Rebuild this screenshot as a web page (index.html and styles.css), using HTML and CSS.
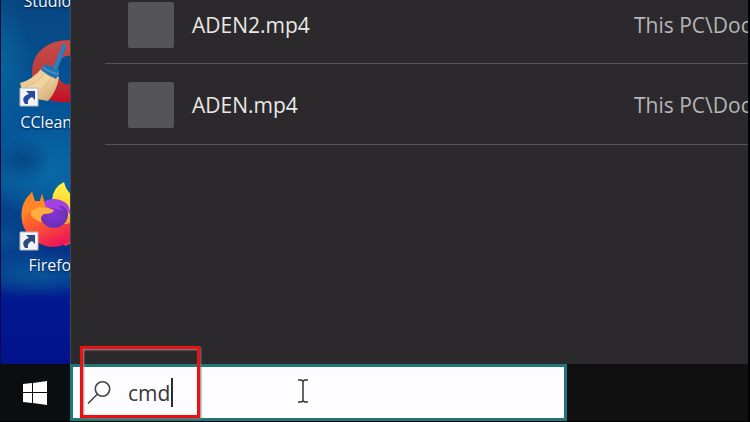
FILE: index.html
```html
<!DOCTYPE html>
<html lang="en">
<head>
<meta charset="utf-8">
<meta name="viewport" content="width=device-width, initial-scale=1">
<title>Windows Search</title>
<link rel="stylesheet" href="styles.css">
</head>
<body>
<div class="workspace">
  <nav class="desktop" aria-label="Desktop">
    <a class="shortcut shortcut-top" href="#"><span class="shortcut-name">Studio 3</span></a>
    <a class="shortcut" href="#">
      <svg class="shortcut-icon" viewBox="0 0 80 72" aria-hidden="true">
        <defs>
          <linearGradient id="cc-red" x1="0" y1="0" x2="0" y2="1"><stop offset="0" stop-color="#c94b48"/><stop offset=".6" stop-color="#b83b3d"/><stop offset="1" stop-color="#c60c25"/></linearGradient>
          <linearGradient id="cc-brush" x1="0" y1="0" x2="1" y2="1"><stop offset="0" stop-color="#e2b87c"/><stop offset=".5" stop-color="#f3d6a4"/><stop offset="1" stop-color="#c99b62"/></linearGradient>
        </defs>
        <path d="M74 7C64 0 50 0 39 4C25 10 19 20 19 34C19 51 31 62 47 63C59 64 68 61 76 54L65 42C57 48 50 46 46 40C41 32 44 22 51 18C56 15 60 18 64 22Z" fill="url(#cc-red)"/>
        <path d="M29 29L46 38Q44 52 35 62Q30 61 24 60Q14 56 9 51L7 44Q19 41 29 29Z" fill="url(#cc-brush)"/>
        <path d="M13 47Q24 44 31 35M23 55Q33 50 38 38" fill="none" stroke="#cfa36b" stroke-width="1" opacity=".5"/>
        <path d="M28 31Q29 25 35 26L41 28L50 6Q53 4 53 9L45 29Q48 34 43 40Q35 37 28 31Z" fill="#256fae"/>
        <path d="M42 29L51 7" stroke="#2f7ebb" stroke-width="4" stroke-linecap="round"/>
        <path d="M30 28Q37 34 46 35" fill="none" stroke="#3e8dc9" stroke-width="2"/>
        <path d="M7 49H25V67H7Z" fill="#f4f3f4" stroke="#b8b8c2"/>
        <path d="M13 52H22V61L19 58Q14 60 15 65L12 65Q7 58 16 55Z" fill="#27499b"/>
      </svg>
      <span class="shortcut-name">CCleaner</span>
    </a>
    <a class="shortcut" href="#">
      <svg class="shortcut-icon" viewBox="0 0 80 72" aria-hidden="true">
        <defs>
          <linearGradient id="fx-fire" x1="0" y1="0" x2=".5" y2="1"><stop offset="0" stop-color="#ff9a23"/><stop offset=".5" stop-color="#ff632c"/><stop offset="1" stop-color="#ef1955"/></linearGradient>
          <linearGradient id="fx-yellow" x1="0" y1="0" x2="0" y2="1"><stop offset="0" stop-color="#fff44e"/><stop offset=".45" stop-color="#ffcf25"/><stop offset="1" stop-color="#f33c3e"/></linearGradient>
          <radialGradient id="fx-violet"><stop offset="0" stop-color="#8832d8"/><stop offset="1" stop-color="#6830b5"/></radialGradient>
        </defs>
        <path d="M39 18Q40 5 51 0Q53 9 60 14Q72 25 70 39Q67 58 52 64L39 45Z" fill="url(#fx-yellow)"/>
        <path d="M13 17L19 10L22 19L27 19L29 12L33 25L38 43L54 42L68 36Q68 55 53 62Q38 69 24 60Q4 47 10 24Z" fill="url(#fx-fire)"/>
        <circle cx="41" cy="32" r="14" fill="url(#fx-violet)"/>
        <path d="M28 22Q36 15 47 18Q58 21 57 33Q53 24 45 23L51 29Q39 25 28 26Z" fill="#a441e2"/>
        <path d="M18 27Q28 22 41 28Q40 32 31 32Q26 35 29 40Q22 39 18 33Z" fill="#ffad3b"/>
        <path d="M13 17L19 10L22 20L27 19L29 12L33 26L26 25L18 29Q10 33 10 42Q6 28 13 17Z" fill="#ff8528"/>
        <path d="M7 50H25V68H7Z" fill="#f4f3f4" stroke="#b8b8c2"/>
        <path d="M13 53H22V62L19 59Q14 61 15 66L12 66Q7 59 16 56Z" fill="#284b83"/>
      </svg>
      <span class="shortcut-name">Firefox</span>
    </a>
  </nav>
  <main class="results">
    <ul class="result-list">
      <li class="result"><span class="thumbnail"></span><span class="file-name">ADEN2.mp4</span><span class="file-path">This PC\Documents</span></li>
      <li class="result"><span class="thumbnail"></span><span class="file-name">ADEN.mp4</span><span class="file-path">This PC\Documents</span></li>
    </ul>
  </main>
</div>
<footer class="taskbar">
  <button class="start" type="button" aria-label="Start">
    <svg viewBox="0 0 24 24" width="24" height="24" aria-hidden="true"><path d="M0 3L9 2V11H0ZM10 2L24 0V11H10ZM0 12H9V22L0 21ZM10 12H24V24L10 22Z" fill="#fff"/></svg>
  </button>
  <form class="search" role="search">
    <label class="search-label" for="query" aria-label="Search">
      <svg viewBox="0 0 24 24" width="24" height="24" aria-hidden="true"><circle cx="15.5" cy="8" r="7.2" fill="none" stroke="#444" stroke-width="1.6"/><path d="M10.5 13L1 22.5" stroke="#444" stroke-width="1.6"/></svg>
    </label>
    <input class="query" id="query" type="text" value="cmd" autocomplete="off" spellcheck="false">
    <span class="caret"></span>
    <svg class="pointer" viewBox="0 0 12 24" width="12" height="24" aria-hidden="true"><path d="M1 1H4L6 2L8 1H11M6 2V22M1 23H4L6 22L8 23H11" fill="none" stroke="#333" stroke-width="1.5"/></svg>
    <span class="highlight"></span>
  </form>
</footer>
</body>
</html>
```
FILE: styles.css
```css
* { box-sizing: border-box; }
body {
  display: flex;
  flex-direction: column;
  min-height: 100vh;
  margin: 0;
  overflow: hidden;
  background: #101010;
  color: #e8e8e8;
  font-family: "Open Sans", "Noto Sans", sans-serif;
  border-right: 2px solid #000;
  border-bottom: 1px solid #000;
}
.workspace { display: flex; flex: 1; }
.desktop {
  flex: 0 0 70px;
  overflow: hidden;
  border-left: 1px solid #000d45;
  background:
    radial-gradient(ellipse 28px 22px at 22px 160px, #064785, transparent),
    radial-gradient(ellipse 60px 54px at 52px 172px, #0869a5, transparent),
    radial-gradient(ellipse 30px 70px at 0 65px, #08639a, transparent),
    radial-gradient(ellipse 52px 28px at 0 238px, #075193, transparent),
    radial-gradient(ellipse 65px 24px at 36px 273px, #08569b, transparent),
    linear-gradient(#074681 0, #05569a 120px, #075796 185px, #062c83 235px, #053b8c 275px, #031991 300px, #02128a 100%);
}
.shortcut {
  display: flex;
  flex-direction: column;
  align-items: center;
  width: 106px;
  margin-bottom: 11px;
  color: #f3f6fa;
  font-size: 16px;
  line-height: 22px;
  text-decoration: none;
  text-shadow: 0 1px 2px #00183a;
}
.shortcut-top { height: 12px; justify-content: flex-end; margin-bottom: 27px; }
.shortcut-icon { width: 80px; height: 72px; align-self: flex-start; margin-left: 12px; }
.shortcut + .shortcut { min-height: 132px; }
.results {
  flex: 1;
  min-width: 0;
  overflow: hidden;
  border-left: 1px solid #414852;
  background: #2b292b;
}
.result-list { margin: 0; padding: 0 0 0 34px; list-style: none; }
.result {
  display: grid;
  grid-template-columns: 46px 1fr 114px;
  column-gap: 18px;
  align-items: center;
  height: 81px;
  padding-top: 2px;
  padding-left: 23px;
  border-bottom: 1px solid #555356;
  font-size: 21px;
  line-height: 28px;
  white-space: nowrap;
}
.result:first-child { height: 64px; padding-bottom: 16px; }
.thumbnail { height: 46px; border-radius: 2px; background: #555456; }
.file-path { overflow: hidden; color: #b7b5b7; }
.taskbar { display: flex; height: 57px; background: #101010; }
.start {
  flex: 0 0 70px;
  display: grid;
  place-items: center;
  padding: 0;
  border: 0;
  background: #0b0e11;
}
.search {
  position: relative;
  display: flex;
  align-items: center;
  width: 497px;
  padding-left: 14px;
  border: 3px solid #20777b;
  background: #fdfcfe;
}
.search-label { display: flex; }
.query {
  flex: 1;
  min-width: 0;
  height: 36px;
  margin-left: 17px;
  padding: 0;
  border: 0;
  outline: 0;
  background: transparent;
  color: #383638;
  font: 21px/28px "Open Sans", "Noto Sans", sans-serif;
}
.caret { position: absolute; left: 98px; top: 11px; width: 2px; height: 29px; background: #2c2c2c; }
.pointer { position: absolute; left: 224px; top: 12px; }
.highlight {
  position: absolute;
  left: 7px;
  top: -21px;
  width: 120px;
  height: 72px;
  border: 3px solid #ec1013;
  box-shadow: 1px 1px 2px #777, inset 1px 1px 2px #999;
}
```
